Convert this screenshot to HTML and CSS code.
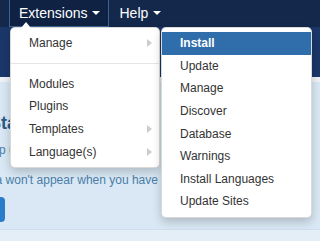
FILE: index.html
```html
<!DOCTYPE html>
<html lang="en">
<head>
    <meta charset="UTF-8">
    <meta name="viewport" content="width=device-width, initial-scale=1.0">
    <title>Extensions menu</title>
    <link rel="stylesheet" href="styles.css">
</head>
<body>
    <nav class="navbar">
        <ul class="nav">
            <li class="nav-item open">
                <a class="nav-link">Extensions <span class="caret"></span></a>
                <ul class="dropdown-menu">
                    <li class="submenu">
                        <a>Manage <span class="arrow"></span></a>
                        <ul class="dropdown-menu sub-menu">
                            <li class="active"><a>Install</a></li>
                            <li><a>Update</a></li>
                            <li><a>Manage</a></li>
                            <li><a>Discover</a></li>
                            <li><a>Database</a></li>
                            <li><a>Warnings</a></li>
                            <li><a>Install Languages</a></li>
                            <li><a>Update Sites</a></li>
                        </ul>
                    </li>
                    <li class="divider"></li>
                    <li><a>Modules</a></li>
                    <li><a>Plugins</a></li>
                    <li class="submenu"><a>Templates <span class="arrow"></span></a></li>
                    <li class="submenu"><a>Language(s) <span class="arrow"></span></a></li>
                </ul>
            </li>
            <li class="nav-item">
                <a class="nav-link">Help <span class="caret"></span></a>
            </li>
        </ul>
    </nav>

    <header class="subhead"></header>
    <div class="strip"></div>

    <section class="alert">
        <div class="alert-body">
            <h4 class="alert-title">Joomla Statistics</h4>
            <p class="line">Joomla will help us improve</p>
            <p class="line second">Your site's data won't appear when you have it turned off</p>
            <button class="btn">Always</button>
        </div>
    </section>
</body>
</html>
```

FILE: styles.css
```css
body {
    margin: 0;
    height: 241px;
    overflow: hidden;
    font-family: "Liberation Sans", Arial, sans-serif;
    background: #e3eef7;
}

.navbar {
    height: 27px;
    background: #13284b;
}

.nav {
    list-style: none;
    margin: 0;
    padding: 0 0 0 9px;
    display: flex;
}

.nav-item {
    position: relative;
}

.nav-link {
    display: flex;
    align-items: center;
    height: 26px;
    padding: 0 8px 0 9px;
    border: 1px solid transparent;
    border-top: 0;
    color: #fff;
    font-size: 14px;
    cursor: pointer;
}

.nav-item.open > .nav-link {
    border-color: #3f6493;
    background: #0f2243;
}

.caret {
    display: inline-block;
    margin-left: 5px;
    border-top: 4px solid #fff;
    border-left: 4px solid transparent;
    border-right: 4px solid transparent;
}

.dropdown-menu {
    list-style: none;
    margin: 0;
    padding: 4px 0;
    position: absolute;
    top: 27px;
    left: 1px;
    width: 148px;
    background: #fff;
    border: 1px solid rgba(0, 0, 0, 0.15);
    border-radius: 5px;
    box-shadow: 0 4px 10px rgba(0, 0, 0, 0.2);
    z-index: 10;
}

.nav-item.open > .dropdown-menu::before {
    content: "";
    position: absolute;
    top: -6px;
    left: 10px;
    border-bottom: 6px solid #fff;
    border-left: 5px solid transparent;
    border-right: 5px solid transparent;
}

.dropdown-menu li {
    position: relative;
}

.dropdown-menu a {
    display: flex;
    align-items: center;
    justify-content: space-between;
    height: 22.6px;
    padding: 0 7px 0 18px;
    color: #333;
    font-size: 12px;
    white-space: nowrap;
}

.arrow {
    border-left: 5px solid #ccc;
    border-top: 4px solid transparent;
    border-bottom: 4px solid transparent;
}

.divider {
    height: 1px;
    margin: 8px 0 9px;
    background: #e5e5e5;
}

.sub-menu {
    top: -5px;
    left: 100%;
    margin-left: 2px;
    width: 149px;
}

.sub-menu li.active a {
    background: #2f6dab;
    color: #fff;
    font-weight: bold;
}

.subhead {
    height: 50px;
    background: #1b3769;
}

.strip {
    height: 5px;
    background: #eef2f6;
}

.alert {
    height: 147px;
    background: #d9e8f4;
    border-bottom: 1px solid #cddfee;
}

.alert-body {
    margin-left: -79px;
    padding-top: 31px;
    white-space: nowrap;
}

.alert-title {
    margin: 0;
    font-size: 18px;
    line-height: 20px;
    color: #2b5a86;
}

.line {
    margin: 8px 0 0;
    font-size: 12px;
    line-height: 18px;
    color: #4a7ea8;
}

.line.second {
    margin-top: 12px;
}

.btn {
    display: block;
    margin-top: 8px;
    height: 25px;
    width: 84px;
    border: none;
    border-radius: 4px;
    background: #2a7cc8;
    color: #fff;
    font-family: inherit;
    font-size: 13px;
}
```
